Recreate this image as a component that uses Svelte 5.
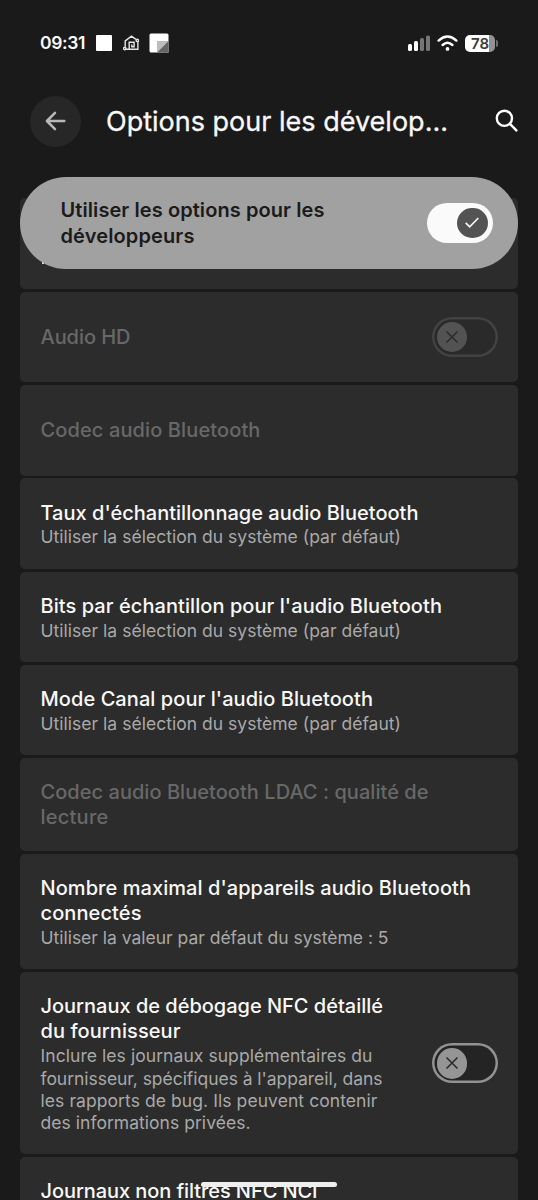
<script>
  // Each text line carries the advance width it should occupy.
  const items = [
    { title: [['Audio HD', 90]], off: true, toggle: true },
    { title: [['Codec audio Bluetooth', 220]], off: true },
    {
      title: [["Taux d'échantillonnage audio Bluetooth", 378]],
      sub: [['Utiliser la sélection du système (par défaut)', 360.5]]
    },
    {
      title: [["Bits par échantillon pour l'audio Bluetooth", 401.5]],
      sub: [['Utiliser la sélection du système (par défaut)', 360.5]]
    },
    {
      title: [["Mode Canal pour l'audio Bluetooth", 332.5]],
      sub: [['Utiliser la sélection du système (par défaut)', 360.5]]
    },
    { title: [['Codec audio Bluetooth LDAC : qualité de', 388], ['lecture', 68]], off: true },
    {
      title: [["Nombre maximal d'appareils audio Bluetooth", 430.5], ['connectés', 101]],
      sub: [['Utiliser la valeur par défaut du système : 5', 348]]
    },
    {
      title: [['Journaux de débogage NFC détaillé', 342.5], ['du fournisseur', 140]],
      sub: [
        ['Inclure les journaux supplémentaires du', 332],
        ["fournisseur, spécifiques à l'appareil, dans", 342],
        ['les rapports de bug. Ils peuvent contenir', 337],
        ['des informations privées.', 210]
      ],
      toggle: true
    },
    { title: [['Journaux non filtrés NFC NCI', 277]] }
  ];

  function fit(node, width) {
    const natural = node.getBoundingClientRect().width;
    node.style.letterSpacing = (width - natural) / node.textContent.length + 'px';
  }
</script>

<div class="screen">
  <div class="status">
    <span class="time" use:fit={45}>09:31</span>
    <svg class="square" width="16" height="16" viewBox="0 0 16 16"><rect width="16" height="16" rx="1" fill="#fff" /></svg>
    <svg class="home" width="17" height="16" viewBox="0 0 17 16" fill="none" stroke="#e6e6e6" stroke-width="1.4">
      <path d="M2.200 11.800V5.900L8.500 1.200l4.400 3.200M14.900 6.600v7.600H6.200V7.200h4.900v4.500H8.800V9.500M2.800 14.200h3.400" />
      <circle cx="1.800" cy="13.500" r="1.200" />
      <circle cx="14.300" cy="5.400" r="1.200" />
    </svg>
    <svg class="note" width="20" height="20" viewBox="0 0 20 20">
      <path d="M2 .5h16Q19.500.5 19.500 2V19.500H2Q.5 19.500.5 18V2Q.5.5 2 .5Z" fill="#fff" />
      <path d="M8 8h11.500L8 19.500Z" fill="#bdbdbd" />
      <path d="M19.500 8v11.500H8Z" fill="#656565" />
    </svg>
    <span class="grow"></span>
    <svg class="signal" width="23" height="17" viewBox="0 0 23 17">
      <rect x="0" y="9" width="4" height="7" rx="1.500" fill="#fff" />
      <rect x="6" y="6" width="4" height="10" rx="1.500" fill="#fff" />
      <rect x="12" y="3" width="4" height="13" rx="1.500" fill="#757575" />
      <rect x="18" y="0.500" width="4" height="15.500" rx="1.500" fill="#757575" />
    </svg>
    <svg class="wifi" width="21" height="17" viewBox="0 0 21 17" fill="none" stroke="#fff" stroke-width="2.400" stroke-linecap="round">
      <path d="M1.600 5.600Q10.500-2.400 19.400 5.600M5.600 10Q10.500 5.500 15.400 10" />
      <circle cx="10.500" cy="13.900" r="1.900" fill="#fff" stroke="none" />
    </svg>
    <span class="battery">78</span><i class="nub"></i>
  </div>

  <header>
    <span class="back">
      <svg width="22" height="20" viewBox="0 0 22 20" fill="none" stroke="#b8b8b8" stroke-width="2.500" stroke-linecap="round" stroke-linejoin="round">
        <path d="M19.300 10H1.900M10 1.800 1.900 10l8.100 8.200" />
      </svg>
    </span>
    <h1><span use:fit={342}>Options pour les dévelop...</span></h1>
    <svg class="search" width="24" height="24" viewBox="0 0 24 24" fill="none" stroke="#fff" stroke-width="2.400">
      <circle cx="9.400" cy="9.300" r="7.600" />
      <path d="m14.700 14.700 7.400 7.400" />
    </svg>
  </header>

  <main>
    <div class="card first"><i class="speck"></i></div>
    {#each items as item}
      <div class="card" class:off={item.off}>
        <div class="text">
          {#each item.title as [line, w]}
            <div class="title"><span use:fit={w}>{line}</span></div>
          {/each}
          {#each item.sub ?? [] as [line, w]}
            <div class="sub"><span use:fit={w}>{line}</span></div>
          {/each}
        </div>
        {#if item.toggle}
          <span class="switch">
            <span class="thumb">
              <svg width="14" height="14" viewBox="0 0 14 14"><path d="m1.500 1.500 11 11m0-11-11 11" stroke="#2c2c2c" stroke-width="1.600" /></svg>
            </span>
          </span>
        {/if}
      </div>
    {/each}

    <div class="main-switch">
      <div class="text">
        <div class="title"><span use:fit={264}>Utiliser les options pour les</span></div>
        <div class="title"><span use:fit={134}>développeurs</span></div>
      </div>
      <span class="switch on">
        <span class="thumb">
          <svg width="14" height="11" viewBox="0 0 14 11" fill="none" stroke="#f5f5f5" stroke-width="1.700"><path d="m.7 5.800 4 4L13.300 1" /></svg>
        </span>
      </span>
    </div>
  </main>
  <div class="handle"></div>
</div>

<style>
  :global(body) { background: #1a1a1a; }
  .screen {
    box-sizing: border-box;
    position: relative;
    width: 538px;
    height: 1200px;
    overflow: hidden;
    background: #1a1a1a;
    color: #f8f8f8;
    font-family: Inter, "Open Sans", sans-serif;
    white-space: nowrap;
  }
  .status {
    display: flex;
    align-items: center;
    height: 24px;
    padding: 31px 40px 1px 40px;
  }
  .time { font-size: 17.500px; font-weight: 600; line-height: 24px; }
  .square { margin-left: 11px; }
  .home { margin-left: 11px; }
  .note { margin-left: 9px; }
  .grow { flex: 1; }
  .wifi { margin: 0 7px 0 6px; }
  .battery {
    width: 30px;
    height: 17px;
    border-radius: 5px;
    background: linear-gradient(90deg, #fff 80%, #929292 80%);
    color: #3b3b3b;
    font-size: 15px;
    font-weight: 600;
    line-height: 18px;
    text-align: center;
  }
  .nub { width: 2px; height: 7px; margin-left: 1px; border-radius: 0 2px 2px 0; background: #6f6f6f; }
  header {
    display: flex;
    align-items: center;
    height: 50px;
    padding: 40px 19px 0 30px;
  }
  .back {
    display: flex;
    align-items: center;
    justify-content: center;
    width: 51px;
    height: 51px;
    border-radius: 50%;
    background: #272727;
  }
  h1 { flex: 1; margin: 0 0 0 25px; padding-top: 2px; font-size: 27px; font-weight: 400; line-height: 34px; -webkit-text-stroke: 0.300px; }
  main {
    position: relative;
    display: flex;
    flex-direction: column;
    gap: 2.800px;
    margin: 52px 20px 0;
  }
  .card {
    box-sizing: border-box;
    display: flex;
    align-items: center;
    justify-content: space-between;
    min-height: 90.500px;
    padding: 21.300px 20.500px;
    border-radius: 5px;
    background: #2c2c2c;
  }
  .card .text { padding-top: 0.700px; margin-bottom: -0.700px; }
  .card:nth-last-child(2) { align-items: flex-start; padding-top: 21px; }
  .first { min-height: 91px; align-items: flex-start; }
  .speck { width: 2px; height: 2px; margin: 43px 0 0 1px; background: #ddd; }
  .title { font-size: 20px; font-weight: 500; line-height: 25.200px; }
  .sub { color: #a9a9a9; font-size: 17.500px; line-height: 22.300px; }
  .sub span { position: relative; top: 0.700px; }
  .off .title { color: #686868; }
  .switch {
    box-sizing: border-box;
    display: flex;
    align-items: center;
    width: 66px;
    height: 40px;
    padding: 0 5px;
    border-radius: 20px;
    background: #242424;
    box-shadow: inset 0 0 0 2.500px #929292;
  }
  .thumb {
    display: flex;
    align-items: center;
    justify-content: center;
    width: 30.500px;
    height: 30.500px;
    border-radius: 50%;
    background: #959595;
  }
  .off .switch { background: #2a2a2a; box-shadow: inset 0 0 0 2.500px #424242; }
  .off .thumb { background: #535353; }
  .main-switch {
    position: absolute;
    top: -21.500px;
    left: 0;
    right: 0;
    box-sizing: border-box;
    display: flex;
    align-items: center;
    justify-content: space-between;
    height: 92.500px;
    padding: 0 25px 0 40.500px;
    border-radius: 47px;
    background: #a1a1a1;
    color: #1b1b1b;
  }
  .main-switch .text { padding-top: 1.500px; }
  .main-switch .title { font-weight: 600; }
  .on { justify-content: flex-end; padding-right: 5.500px; background: #fafafa; box-shadow: none; }
  .on .thumb { background: #535353; }
  .handle {
    position: absolute;
    bottom: 13px;
    left: 201px;
    width: 136px;
    height: 5px;
    border-radius: 3px;
    background: #eee;
  }
</style>
